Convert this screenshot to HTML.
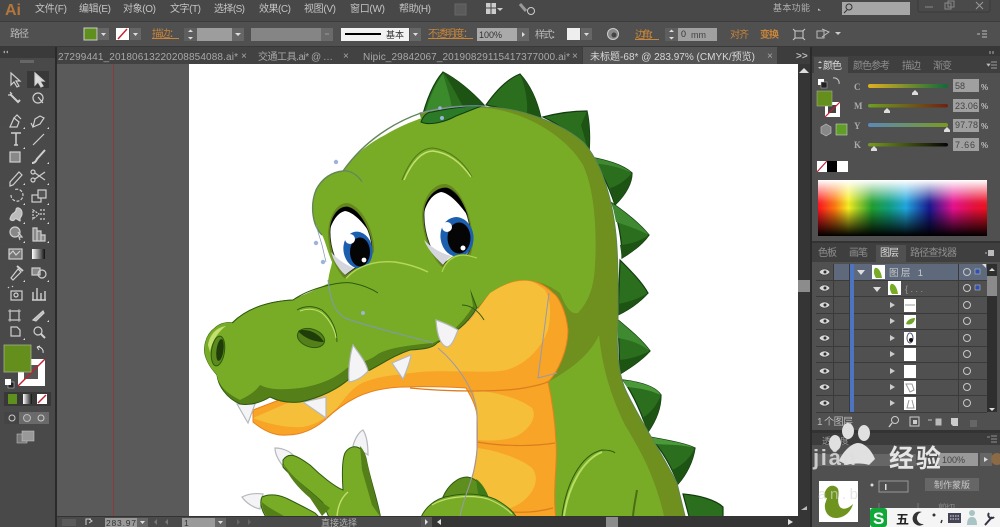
<!DOCTYPE html>
<html lang="zh"><head><meta charset="utf-8"><title>Illustrator</title>
<style>
html,body{margin:0;padding:0;background:#535353}
body{width:1000px;height:527px;overflow:hidden}
svg{display:block;font-family:"Liberation Sans","Noto Sans CJK SC",sans-serif;filter:blur(.35px)}
.m{font-size:10px;fill:#c4c4c4}
.o{font-size:10px;fill:#c9853a;text-decoration:underline}
.t{font-size:10px;fill:#a8a8a8}
.p{font-size:10px;fill:#8f8f8f}
.ic{fill:none;stroke:#cfcfcf;stroke-width:1.2}
.sp{stroke:#123c10;stroke-width:1.2;fill:#2a6e1e}
.th{fill:#f4f4f6;stroke:#b5b8bd;stroke-width:1.2}
.ln{fill:none;stroke:#2c5a10;stroke-width:1}
</style></head><body>
<svg width="1000" height="527" viewBox="0 0 1000 527" xmlns="http://www.w3.org/2000/svg">
<defs>
<linearGradient id="sp" x1="0" x2="1" y1="0" y2="0">
<stop offset="0" stop-color="#ff1020"/><stop offset=".1" stop-color="#ff7a10"/><stop offset=".18" stop-color="#f8f020"/><stop offset=".32" stop-color="#20a030"/><stop offset=".42" stop-color="#10a080"/><stop offset=".52" stop-color="#20a8e0"/><stop offset=".66" stop-color="#181890"/><stop offset=".8" stop-color="#e81090"/><stop offset=".92" stop-color="#e81040"/><stop offset="1" stop-color="#f01020"/>
</linearGradient>
<linearGradient id="spv" x1="0" x2="0" y1="0" y2="1">
<stop offset="0" stop-color="#fff" stop-opacity="1"/><stop offset=".35" stop-color="#fff" stop-opacity=".15"/><stop offset=".5" stop-color="#000" stop-opacity="0"/><stop offset="1" stop-color="#000" stop-opacity="1"/>
</linearGradient>
<linearGradient id="sC" x1="0" x2="1"><stop offset="0" stop-color="#e0b020"/><stop offset="1" stop-color="#106a3a"/></linearGradient>
<linearGradient id="sM" x1="0" x2="1"><stop offset="0" stop-color="#6fa020"/><stop offset="1" stop-color="#702010"/></linearGradient>
<linearGradient id="sY" x1="0" x2="1"><stop offset="0" stop-color="#5a8ab8"/><stop offset="1" stop-color="#7a9a20"/></linearGradient>
<linearGradient id="sK" x1="0" x2="1"><stop offset="0" stop-color="#7a9a20"/><stop offset="1" stop-color="#050505"/></linearGradient>
<linearGradient id="gr" x1="0" x2="1"><stop offset="0" stop-color="#fff"/><stop offset="1" stop-color="#111"/></linearGradient>
<clipPath id="art"><rect x="57" y="64" width="741" height="452"/></clipPath>
</defs>

<!-- base -->
<rect width="1000" height="527" fill="#4a4a4a"/>
<!-- canvas -->
<rect x="57" y="64" width="741" height="452" fill="#5a5a5a"/>
<rect x="189" y="64" width="609" height="452" fill="#fff"/>
<rect x="113" y="64" width="1" height="452" fill="#8c3a3a"/>

<g clip-path="url(#art)">
<!-- spikes -->
<path class="sp" d="M421 122C426 100 434 82 443 72C458 80 472 92 484 105L440 122C432 124 424 125 421 122Z"/>
<path d="M443 72C452 85 462 105 466 112L484 105C472 92 458 80 443 72Z" fill="#1d5414"/>
<path d="M424 120C428 100 435 85 443 74C448 90 452 105 453 113Z" fill="#3b8a2c"/>
<path class="sp" d="M486 105C495 92 507 79 520 74C530 85 537 100 541 118L500 108Z"/>
<path d="M520 74C526 88 528 104 527 114L541 118C537 100 530 85 520 74Z" fill="#1d5414"/>
<path class="sp" d="M543 117C558 113 572 111 587 111C590 125 590 140 589 153C575 135 560 125 543 117Z"/>
<path d="M581 125L587 111C590 125 590 140 589 153Z" fill="#1d5414"/>
<path class="sp" d="M590 157C605 160 622 164 632 173C632 185 624 196 615 205C610 190 602 170 590 157Z"/>
<path d="M632 173C632 185 624 196 615 205L610 188C618 186 626 180 632 173Z" fill="#1d5414"/>
<path d="M590 157C605 160 622 164 632 173C615 165 605 165 594 163Z" fill="#3f8a30"/>
<path class="sp" d="M612 203C625 212 640 224 649 235C642 245 632 252 622 258C622 240 618 220 612 203Z"/>
<path d="M649 235C642 245 632 252 622 258L620 245C632 244 642 240 649 235Z" fill="#1d5414"/>
<path d="M612 203C625 212 640 224 649 235C635 228 625 225 616 222Z" fill="#3f8a30"/>
<path class="sp" d="M620 260C630 270 642 282 648 293C640 302 628 310 618 315Z"/>
<path d="M648 293C640 302 628 310 618 315L618 304C630 302 640 298 648 293Z" fill="#1d5414"/>
<path class="sp" d="M618 320C630 330 642 340 650 351C642 360 630 368 620 374Z"/>
<path d="M650 351C642 360 630 368 620 374L618 360C632 359 642 355 650 351Z" fill="#1d5414"/>
<path d="M618 320C630 330 642 340 650 351C638 342 628 340 618 338Z" fill="#3f8a30"/>
<path class="sp" d="M623 380C640 382 655 386 661 395C661 410 655 422 648 432C642 415 634 395 623 380Z"/>
<path d="M661 395C661 410 655 422 648 432L642 418C650 414 657 405 661 395Z" fill="#1d5414"/>
<path d="M623 380C640 382 655 386 661 395C645 388 635 388 627 387Z" fill="#4b9a3a"/>
<path class="sp" d="M650 437C665 440 685 443 695 448C693 462 686 475 678 484C672 468 662 450 650 437Z"/>
<path d="M695 448C693 462 686 475 678 484L672 470C682 466 690 458 695 448Z" fill="#1d5414"/>
<path d="M650 437C665 440 685 443 695 448C680 444 665 445 656 444Z" fill="#4b9a3a"/>
<path class="sp" d="M683 494C698 495 716 500 723 507L723 520L690 520Z"/>

<!-- back band -->
<path d="M420 113C445 105 470 105 487 107C520 108 560 122 583 142C600 160 612 195 616 235C619 265 618 300 618 320C616 350 618 375 627 393C640 420 660 450 677 483L686 520L555 520L548 380L470 300Z" fill="#6f8f1f" stroke="#5f8650" stroke-width="1"/>
<!-- lower body -->
<path d="M548 382C570 370 590 355 599 335C602 365 610 395 625 425C640 450 655 475 665 520L556 520C552 490 558 460 556 443C555 420 552 400 548 382Z" fill="#79ac26"/>
<path d="M562 516C566 485 580 455 602 450C608 450 613 451 615 453" fill="none" stroke="#2c5a10" stroke-width="1"/>
<path d="M564 516C568 488 582 460 602 452" fill="none" stroke="#b9dc62" stroke-width="2"/>
<path d="M633 516C634 505 636 497 637 490" fill="none" stroke="#4a6e14" stroke-width="2"/>

<!-- neck orange -->
<path d="M253 422C265 432 277 436 287 435C300 435 313 430 325 420C335 410 347 402 357 397C372 390 390 387 407 387C430 386 450 387 466 388C472 398 477 408 477 417L477 447C477 458 474 468 472 480L470 520L556 520C552 490 558 460 556 443C555 420 552 400 548 382C558 372 568 350 568 330C566 310 558 296 553 293C545 285 535 280 523 280C510 280 498 288 490 293L470 320L410 350L253 410Z" fill="#f7a427" stroke="#e8801c" stroke-width="1"/>
<!-- yellow highlights -->
<path d="M253 418C270 425 290 428 303 427C320 424 330 414 337 408C345 398 352 388 362 383C378 376 395 375 420 372C450 370 480 373 500 371C520 369 540 352 548 330C552 312 550 298 545 290C535 282 530 280 523 281C510 281 498 288 490 293L470 320L410 350Z" fill="#f6bf3a"/>
<path d="M473 390C495 392 520 398 532 408C538 418 528 430 517 436C505 441 490 441 477 440C478 425 476 405 473 390Z" fill="#f6bf3a"/>
<path d="M477 448C495 450 520 458 532 468C540 478 535 492 522 502C510 510 500 512 490 507C482 500 475 490 472 480C475 470 477 458 477 448Z" fill="#f6bf3a"/>
<path d="M477 442C500 446 530 447 555 443M513 512C528 513 542 511 553 508" fill="none" stroke="#dd7c1e" stroke-width="1.2"/>
<path d="M410 388C450 392 500 392 524 388C535 386 545 384 549 381" fill="none" stroke="#dd7c1e" stroke-width="1.2"/>

<!-- head -->
<path d="M343 171C350 160 365 145 385 135C410 120 450 106 487 108C525 112 565 135 583 165C595 190 597 235 595 265C594 285 590 300 578 313C570 315 565 305 560 293C548 284 535 280 523 280C510 280 498 288 490 293L477 308L330 300L328 285C328 275 332 265 332 262C327 250 325 240 322 235C312 225 310 205 316 190C322 178 332 172 343 171Z" fill="#79ac26"/>
<path d="M421 113C395 122 365 140 343 171C332 172 322 178 316 190C310 205 312 225 322 235" fill="none" stroke="#62865a" stroke-width="1.4"/>
<path d="M343 171C350 170 358 175 362 182" fill="none" stroke="#62865a" stroke-width="1.2"/>
<path d="M402 180C410 160 420 148 433 148C450 150 464 162 472 177" fill="none" stroke="#4e7a14" stroke-width="1"/>
<path d="M404 180C412 162 422 151 433 151C450 153 462 164 471 177" fill="none" stroke="#c3e070" stroke-width="1.4"/>

<!-- spike 1 overlap on head -->
<path d="M421 122C424 114 428 112 432 112C450 108 470 106 484 105L456 116C445 122 430 126 421 122Z" fill="#2a7a28" stroke="#123c10" stroke-width="1"/>

<!-- right eye -->
<path d="M446 184C460 187 473 215 473 245L470 258L443 268C431 258 422 235 422 214C423 198 433 183 446 184Z" fill="#65881c"/>
<path d="M447 188C462 192 472 222 471 245C470 255 465 257 458 257C450 258 445 262 443 265C432 255 424 235 424 215C424 200 435 187 447 188Z" fill="#fff" stroke="#222" stroke-width=".8"/>
<path d="M424 240C432 248 442 254 452 256C448 258 445 262 443 265C436 258 428 250 424 240Z" fill="#d5d5de"/>
<path d="M424 212C425 199 435 187 447 188C456 191 464 203 468 216C458 202 449 193 441 192C432 194 427 203 424 212Z" fill="#000"/>
<ellipse cx="457" cy="237" rx="16.500" ry="20" fill="#1c5fae" transform="rotate(-8 457 237)"/>
<ellipse cx="459" cy="238" rx="11.500" ry="15.500" fill="#050505"/>
<circle cx="447" cy="227" r="5" fill="#fff"/><circle cx="463" cy="248" r="2.500" fill="#fff"/>
<!-- left eye -->
<path d="M348 203C361 206 375 230 374 252L360 268L345 279C334 268 328 250 328 232C329 216 337 202 348 203Z" fill="#65881c"/>
<path d="M348 207C360 210 372 232 372 250C372 256 365 262 358 266L345 275C337 265 330 250 330 232C330 218 338 206 348 207Z" fill="#fff" stroke="#222" stroke-width=".8"/>
<path d="M331 252C338 260 346 265 354 268L345 275C338 268 333 260 331 252Z" fill="#d5d5de"/>
<path d="M330 229C331 217 338 206 348 207C356 209 363 218 368 230C360 219 352 212 345 211C337 213 333 221 330 229Z" fill="#000"/>
<ellipse cx="358" cy="250" rx="14.500" ry="18.500" fill="#1c5fae" transform="rotate(-10 358 250)"/>
<ellipse cx="360" cy="252" rx="10" ry="14.500" fill="#050505"/>
<circle cx="350" cy="239" r="5" fill="#fff"/><circle cx="364" cy="260" r="2.400" fill="#fff"/>

<!-- lid bumps -->
<path d="M341 286C350 268 372 260 395 262C410 264 420 268 427 272L440 300L341 300Z" fill="#79ac26"/>
<path d="M441 272C446 256 458 252 470 255C476 270 470 290 470 300L430 300Z" fill="#79ac26"/>
<path d="M343 283C352 268 372 260 395 262C408 264 420 268 428 272" fill="none" stroke="#b5d85a" stroke-width="1.400"/>
<path d="M442 272C447 258 458 253 470 256L477 258" fill="none" stroke="#b5d85a" stroke-width="1"/>

<!-- lower jaw teeth -->
<path class="th" d="M303 402L326 418L326 397Z"/>
<path class="th" d="M237 404L248 423L255 404Z"/>

<!-- snout dark -->
<path d="M293 300C275 301 250 305 233 323C228 322 220 323 215 328C205 335 202 350 207 360C210 368 215 372 217 375C218 385 226 398 240 404C250 406 262 402 270 397C280 402 290 403 300 402C320 398 340 388 350 378C358 372 365 372 370 370C385 362 395 355 410 350C425 349 433 348 437 343C450 335 465 328 477 308L470 290L340 280Z" fill="#557f18" stroke="#2c5a10" stroke-width="1"/>
<!-- snout light -->
<path d="M293 300C275 301 250 305 233 323C228 322 220 323 215 328C205 335 202 350 207 360C210 368 215 372 217 375C218 385 226 393 240 400C248 396 255 392 260 385C270 390 283 390 300 388C320 385 336 378 347 368C358 362 368 362 378 354C388 348 410 345 433 343C445 338 462 325 473 306L470 288L340 278Z" fill="#79ac26"/>
<path d="M232 323C250 305 275 301 293 300C310 288 340 281 352 283C362 285 372 289 378 293" fill="none" stroke="#2c5a10" stroke-width="1"/>
<path d="M297 310C305 305 315 306 322 310C332 318 337 330 337 342" fill="none" stroke="#2c5a10" stroke-width=".9"/>
<path d="M300 311C308 308 316 309 322 313C330 320 335 330 336 338" fill="none" stroke="#c3e070" stroke-width="1.100"/>
<path d="M208 345C210 333 218 327 226 326C220 330 212 340 210 352Z" fill="#c3e070"/>
<path d="M462 305C470 305 478 310 484 320" fill="none" stroke="#2c5a10" stroke-width="1"/>
<ellipse cx="218" cy="351" rx="6.500" ry="15" fill="#5c8a1c" stroke="#2c5a10" transform="rotate(8 218 351)"/>
<ellipse cx="220" cy="350" rx="3.500" ry="11" fill="#1e3d08" transform="rotate(8 220 350)"/>
<ellipse cx="311" cy="338" rx="14" ry="9" fill="#557f18" stroke="#2c5a10" transform="rotate(18 311 338)"/>
<path d="M298 331C306 328 318 332 324 342C314 342 304 338 298 331Z" fill="#1e3d08"/>

<!-- upper teeth -->
<path class="th" d="M353 345C360 355 366 362 368 371C362 378 355 381 349 382C348 370 350 355 353 345Z"/>
<path class="th" d="M392 363L403 379C406 372 410 362 411 355Z"/>
<path class="th" d="M436 320C445 323 453 327 458 330C455 338 452 346 447 347C440 345 437 335 436 320Z"/>

<!-- hand -->
<path class="th" d="M275 448C282 448 290 451 294 456L283 466C279 461 275 454 275 448Z"/>
<path class="th" d="M363 430C367 436 368 446 368 455L353 446C355 438 359 432 363 430Z"/>
<path class="th" d="M242 497C248 494 256 493 263 494L260 509C254 508 246 503 242 497Z"/>
<path d="M262 497C270 493 280 495 288 499C298 504 308 509 315 513L322 520L268 520C262 512 259 503 262 497Z" fill="#79ac26" stroke="#2c5a10"/>
<path d="M262 502C262 510 266 516 270 520L290 520C280 513 268 508 262 502Z" fill="#557f18"/>
<path d="M283 460C290 450 300 458 310 465C320 475 335 487 343 490C342 475 342 460 345 453C350 444 362 444 366 458C370 480 378 500 381 520L330 520L323 503C310 490 292 478 283 467Z" fill="#79ac26" stroke="#2c5a10"/>
<path d="M283 463C292 478 310 490 323 503L330 508L322 516L310 498C298 488 288 476 283 463Z" fill="#557f18"/>
<path d="M360 446C364 450 366 456 367 462C371 480 376 500 381 518L372 505L362 470Z" fill="#557f18"/>
<path d="M337 516C338 505 342 497 348 492" fill="none" stroke="#c3e070" stroke-width="1.400"/>

<!-- arm -->
<path d="M443 497C448 485 458 477 467 477C476 478 484 486 488 497Z" fill="#5e8f1e" stroke="#2c5a10"/>
<path d="M476 479C482 483 486 490 488 497L478 494Z" fill="#3f7a18"/>
<path d="M420 520C424 508 435 498 450 496C470 492 490 495 500 502C508 507 514 512 518 520Z" fill="#79ac26" stroke="#2c5a10"/>
<path d="M432 505C445 497 470 494 488 499C498 503 506 508 512 514" fill="none" stroke="#c3e070" stroke-width="1.200"/>

<!-- selection paths -->
<g fill="none" stroke="#7f98b8" stroke-width="1">
<path d="M421 113C440 108 465 105 485 106"/>
<path d="M328 280C330 295 332 310 345 318C365 326 405 335 433 343"/>
</g>
<g fill="none" stroke="#9a98ad" stroke-width="1">
<path d="M438 348C458 365 475 390 477 413C478 440 478 460 472 477C468 490 462 505 460 516"/>
<path d="M549 293L538 378L557 373"/>
</g>
<path d="M316 225L322 245L326 262" fill="none" stroke="#7f98b8" stroke-width=".7"/>
<g fill="#9db2dc"><circle cx="440" cy="108" r="1.800"/><circle cx="442" cy="118" r="2"/><circle cx="336" cy="162" r="2.200"/><circle cx="316" cy="243" r="2.200"/><circle cx="323" cy="262" r="2.200"/><circle cx="363" cy="313" r="2"/></g>
</g>

<!-- menu bar -->
<rect width="1000" height="22" fill="#484848"/>
<rect y="21" width="1000" height="1" fill="#3c3c3c"/>
<text x="5" y="15" font-size="16" font-weight="bold" fill="#b3763c">Ai</text>
<g class="m">
<text class="m" x="35" y="12" textLength="32">文件(F)</text>
<text class="m" x="79" y="12" textLength="32">编辑(E)</text>
<text class="m" x="123" y="12" textLength="33">对象(O)</text>
<text class="m" x="170" y="12" textLength="31">文字(T)</text>
<text class="m" x="214" y="12" textLength="31">选择(S)</text>
<text class="m" x="259" y="12" textLength="32">效果(C)</text>
<text class="m" x="304" y="12" textLength="32">视图(V)</text>
<text class="m" x="350" y="12" textLength="35">窗口(W)</text>
<text class="m" x="399" y="12" textLength="32">帮助(H)</text>
</g>
<rect x="455" y="4" width="11" height="11" fill="#5a5a5a" stroke="#666"/>
<rect x="486" y="3" width="10" height="11" fill="#ccc"/><path d="M491 3V14M486 8H496" stroke="#444"/>
<path d="M497 8l3 3 3-3z" fill="#ccc"/>
<path d="M520 4l6 7" stroke="#999" stroke-width="3"/><circle cx="531" cy="11" r="3.500" fill="none" stroke="#ccc"/>
<text x="773" y="11" font-size="9" fill="#b0b0b0" textLength="37">基本功能</text>
<path d="M818 8.500l3 2 -3 0z" fill="#ccc"/>
<rect x="842" y="2" width="68" height="13" fill="#a6a6a6"/>
<circle cx="849" cy="7" r="3" fill="none" stroke="#333"/><path d="M847 10l-3 3" stroke="#333"/>
<rect x="918" y="-2" width="72" height="14" rx="2" fill="#4a4a4a" stroke="#3a3a3a"/>
<path d="M925 7h8" stroke="#888"/><rect x="945" y="3" width="6" height="6" fill="none" stroke="#888"/><rect x="948" y="1" width="6" height="6" fill="none" stroke="#888"/>
<path d="M976 2l7 7M983 2l-7 7" stroke="#999"/>

<!-- control bar -->
<rect y="22" width="1000" height="25" fill="#505050"/>
<rect y="46" width="1000" height="1" fill="#383838"/>
<text x="10" y="37" font-size="10" fill="#bbb" textLength="19">路径</text>
<rect x="84" y="28" width="13" height="12" fill="#5f8f1c" stroke="#ccc"/>
<rect x="98" y="28" width="11" height="12" fill="#666"/><path d="M101 33l2.500 3 2.500-3z" fill="#ddd"/>
<rect x="116" y="28" width="13" height="12" fill="#fff"/><path d="M118 39l9-10" stroke="#c02030" stroke-width="1.400"/>
<rect x="130" y="28" width="11" height="12" fill="#666"/><path d="M133 33l2.500 3 2.500-3z" fill="#ddd"/>
<text class="o" x="152" y="37" textLength="27">描边：</text>
<rect x="184" y="28" width="13" height="13" fill="#5e5e5e"/><path d="M188 32l2.500-2.500 2.500 2.500zM188 37l2.500 2.500 2.500-2.500z" fill="#ddd"/>
<rect x="197" y="28" width="35" height="13" fill="#9d9d9d"/>
<rect x="232" y="28" width="12" height="13" fill="#666"/><path d="M235 33l3 3 3-3z" fill="#ddd"/>
<rect x="251" y="28" width="70" height="13" fill="#858585"/>
<rect x="321" y="28" width="12" height="13" fill="#6a6a6a"/><path d="M325 34h4" stroke="#999"/>
<rect x="341" y="28" width="68" height="13" fill="#f2f2f2"/><rect x="345" y="33" width="36" height="2" fill="#000"/>
<text x="386" y="38" font-size="9" fill="#333">基本</text>
<rect x="410" y="28" width="11" height="13" fill="#666"/><path d="M413 33l2.500 3 2.500-3z" fill="#ddd"/>
<text class="o" x="428" y="37" textLength="45">不透明度：</text>
<rect x="477" y="28" width="40" height="13" fill="#aaa"/>
<text x="479" y="38" font-size="9" fill="#333">100%</text>
<rect x="517" y="28" width="12" height="13" fill="#666"/><path d="M522 32l3 2.500-3 2.500z" fill="#ddd"/>
<text x="535" y="38" font-size="10" fill="#bbb" textLength="26">样式：</text>
<rect x="567" y="28" width="13" height="12" fill="#eee"/>
<rect x="581" y="28" width="11" height="12" fill="#666"/><path d="M584 33l2.500 3 2.500-3z" fill="#ddd"/>
<circle cx="613" cy="34" r="5.500" fill="#888" stroke="#ccc"/><circle cx="614" cy="35" r="2.500" fill="#444"/>
<text class="o" x="635" y="38" textLength="24">边角：</text>
<rect x="665" y="28" width="13" height="13" fill="#5e5e5e"/><path d="M669 32l2.500-2.500 2.500 2.500zM669 37l2.500 2.500 2.500-2.500z" fill="#ddd"/>
<rect x="678" y="28" width="39" height="13" fill="#a0a0a0"/>
<text x="681" y="37" font-size="9" fill="#333">0</text><text x="691" y="38" font-size="9" fill="#444">mm</text>
<text class="o" x="730" y="38" textLength="19" style="text-decoration:none">对齐</text>
<text class="o" x="760" y="38" textLength="19" style="text-decoration:none;font-weight:bold">变换</text>
<path d="M793 29l12 11M805 29l-12 11" stroke="#ccc" stroke-width="1"/><rect x="795" y="31" width="8" height="7" fill="#505050" stroke="#ccc"/>
<rect x="817" y="31" width="7" height="7" fill="none" stroke="#bbb"/><path d="M822 29l7 3-7 5" fill="none" stroke="#bbb"/>
<path d="M835 32l3 3 3-3z" fill="#ccc"/>
<path d="M977 34h3M982 31h5M982 34h5M982 37h5" stroke="#bbb"/>

<!-- tabs -->
<rect y="47" width="1000" height="17" fill="#3d3d3d"/>
<rect x="0" y="47" width="55" height="11" fill="#3a3a3a"/>
<path d="M3 52l2-1.500v3zM6 52l2-1.500v3z" fill="#aaa"/>
<rect x="57" y="47" width="193" height="17" fill="#424242"/>
<rect x="250" y="47" width="110" height="17" fill="#424242"/>
<rect x="360" y="47" width="222" height="17" fill="#424242"/>
<rect x="583" y="47" width="194" height="17" fill="#545454"/>
<text class="t" x="58" y="60" textLength="180">27299441_20180613220208854088.ai*</text>
<text class="t" x="241" y="59" font-size="9">×</text>
<text class="t" x="258" y="60" textLength="75">交通工具.ai* @ …</text>
<text class="t" x="343" y="59">×</text>
<text class="t" x="363" y="60" textLength="207">Nipic_29842067_20190829115417377000.ai*</text>
<text class="t" x="572" y="59">×</text>
<text x="590" y="60" font-size="10" fill="#d8d8d8" textLength="165">未标题-68* @ 283.97% (CMYK/预览)</text>
<text class="t" x="767" y="59">×</text>
<text x="796" y="59" font-size="10" font-weight="bold" fill="#bbb">&gt;&gt;</text>

<!-- toolbar -->
<rect x="0" y="58" width="55" height="458" fill="#494949"/>
<rect x="0" y="516" width="55" height="11" fill="#494949"/>
<rect x="55" y="47" width="2" height="480" fill="#2a2a2a"/>
<rect x="20" y="60" width="14" height="3" fill="#666"/>
<rect x="27" y="71" width="22" height="17" fill="#383838"/>
<g class="ic">
<path d="M11 73l0 12 3-3 3 5 2-1-3-5 4 0z"/>
<path d="M35 73l0 12 3-3 3 5 2-1-3-5 4 0z" fill="#ddd"/>
<path d="M10 94l8 8 2-2" stroke-width="2"/><path d="M10 92l2 2M8 95h3"/>
<circle cx="38" cy="98" r="5"/><path d="M38 97l5 6"/>
<path d="M10 127l4-9 5 4-2 5z"/><path d="M14 118l3-3 4 4"/>
<path d="M33 127l2-8 5-3 4 2-4 6z"/><path d="M33 127l-2-4"/>
<path d="M11 133h10M16 133v12M14 145h4" stroke-width="1.500"/>
<path d="M33 145l11-11"/>
<rect x="10" y="152" width="10" height="10" fill="#888"/>
<path d="M32 163c3 0 4-2 5-4l8-9" stroke-width="2"/>
<path d="M10 182l9-10 3 3-9 10-3 1z"/>
<circle cx="33" cy="180" r="2"/><circle cx="33" cy="172" r="2"/><path d="M35 179l10-7M35 173l10 7"/>
<path d="M11 195a6 6 0 1 0 3-5" stroke-dasharray="3 1.500"/>
<rect x="32" y="195" width="9" height="7"/><rect x="38" y="190" width="8" height="8" fill="#555"/>
<path d="M10 219c2-8 6-5 6-9s6-2 6 3-3 4-2 7-4-3-5-1-4 2-5 0z" fill="#bbb"/>
<path d="M33 210l6 4-6 5zM40 210h6M40 214h6M40 219h6" stroke-dasharray="2 1"/>
<circle cx="15" cy="232" r="5" fill="#888"/><path d="M18 232l4 5-3 0 1 3"/>
<path d="M33 228h4v13h-4zM37 231h4v10h-4zM41 235h4v6h-4z" fill="#888"/>
<rect x="9" y="249" width="13" height="10" fill="#777"/><path d="M9 255l4-4 3 4 4-4"/>
<rect x="32" y="249" width="13" height="10" fill="url(#gr)" stroke="none"/>
<path d="M11 278l7-9 3 3-8 8z"/><path d="M17 266l6 5" stroke-width="2"/>
<rect x="32" y="268" width="8" height="7" fill="#888"/><circle cx="42" cy="274" r="4"/>
<rect x="11" y="291" width="11" height="9"/><circle cx="16" cy="295" r="2"/><path d="M8 287l1 1M12 286l1 1"/>
<path d="M33 300v-8M37 300v-12M41 300v-7M45 300v-9M32 300h14" stroke-width="1.400"/>
<rect x="10" y="311" width="9" height="9"/><path d="M8 311h13M8 320h13M10 309v13M19 309v13" stroke-width=".7"/>
<path d="M33 320l10-9 1 2-8 8z" fill="#bbb"/>
<path d="M11 327h6l3 3v6h-9z"/>
<circle cx="38" cy="331" r="4"/><path d="M41 334l4 4" stroke-width="2"/>
</g>
<path d="M0 128H55M0 188H55M0 244H55" stroke="#555" stroke-width=".6" opacity=".6"/>
<g fill="#ddd"><path d="M23 129h2v-2zM47 129h2v-2zM23 149h2v-2zM47 164h2v-2zM23 185h2v-2zM47 185h2v-2zM23 205h2v-2zM47 205h2v-2zM23 224h2v-2zM47 224h2v-2zM23 243h2v-2zM47 243h2v-2zM23 282h2v-2zM47 282h2v-2zM47 322h2v-2zM23 340h2v-2z"/></g>

<!-- fill / stroke -->
<rect x="18" y="359" width="27" height="27" fill="#fff"/><rect x="24" y="365" width="14" height="14" fill="#555"/>
<path d="M18 386l27-27" stroke="#c02030" stroke-width="1.400"/>
<rect x="4" y="345" width="27" height="27" fill="#648f1c" stroke="#a5b08a" stroke-width=".8"/>
<path d="M37 347a5 5 0 0 1 6 6M37 347l3-1M37 347l2 3" fill="none" stroke="#ddd"/>
<rect x="8" y="382" width="6" height="6" fill="#222" stroke="#ddd" stroke-width=".5"/><rect x="5" y="379" width="6" height="6" fill="#fff"/>
<rect x="4" y="392" width="47" height="14" fill="#383838"/>
<rect x="8" y="394" width="9" height="10" fill="#5f8f1c"/>
<rect x="23" y="394" width="9" height="10" fill="url(#gr)"/>
<rect x="37" y="394" width="10" height="10" fill="#fff"/><path d="M38 403l8-8" stroke="#c02030" stroke-width="1.400"/>
<rect x="4" y="412" width="45" height="12" fill="#6a6a6a"/><rect x="4" y="412" width="15" height="12" fill="#444"/>
<circle cx="12" cy="418" r="3" fill="none" stroke="#ccc"/><circle cx="27" cy="418" r="3.500" fill="#777" stroke="#bbb"/><circle cx="41" cy="418" r="3" fill="none" stroke="#ccc"/>
<rect x="17" y="434" width="10" height="9" fill="#777" stroke="#ccc" stroke-width=".5"/><rect x="22" y="431" width="12" height="10" fill="#999" stroke="#ccc" stroke-width=".5"/>

<!-- status bar -->
<rect x="57" y="516" width="741" height="11" fill="#4a4a4a"/>
<rect x="57" y="516" width="741" height="1" fill="#333"/>
<rect x="62" y="519" width="14" height="7" fill="#5a5a5a"/>
<path d="M86 525v-6h5M89 519l3 2-3 2" fill="none" stroke="#ccc"/>
<rect x="105" y="518" width="32" height="9" fill="#9a9a9a"/>
<text x="106" y="526" font-size="8.500" fill="#333" textLength="30">283.97</text>
<rect x="137" y="518" width="11" height="9" fill="#666"/><path d="M140 521l2.500 3 2.500-3z" fill="#ddd"/>
<path d="M157 519l-3 3 3 3zM168 519l-3 3 3 3z" fill="#777"/>
<rect x="182" y="518" width="33" height="9" fill="#9a9a9a"/>
<text x="184" y="526" font-size="8.500" fill="#333">1</text>
<rect x="215" y="518" width="11" height="9" fill="#666"/><path d="M218 521l2.500 3 2.500-3z" fill="#ddd"/>
<path d="M237 519l3 3-3 3zM248 519l3 3-3 3z" fill="#666"/>
<text x="321" y="526" font-size="9" fill="#b0b0b0" textLength="36">直接选择</text>
<rect x="421" y="517" width="11" height="10" fill="#555"/><path d="M425 519l3 3-3 3z" fill="#ddd"/>
<rect x="432" y="517" width="366" height="10" fill="#353535"/>
<path d="M441 519l-4 3 4 3z" fill="#ddd"/>
<rect x="606" y="517" width="12" height="10" fill="#8c8c8c"/>
<path d="M788 519l5 3-5 3z" fill="#ddd"/>

<!-- vertical scrollbar -->
<rect x="798" y="64" width="12" height="463" fill="#353535"/>
<path d="M799 73l5-5 5 5z" fill="#ddd"/>
<rect x="798" y="280" width="12" height="12" fill="#8c8c8c"/>
<path d="M801 510l6-4v4z" fill="#bbb"/>
<rect x="810" y="47" width="2" height="480" fill="#2a2a2a"/>

<!-- right panels -->
<rect x="812" y="47" width="188" height="480" fill="#505050"/>
<rect x="812" y="47" width="188" height="9" fill="#383838"/>
<path d="M990 51v3M993 51v3" stroke="#aaa"/>
<!-- color -->
<rect x="812" y="56" width="188" height="17" fill="#3f3f3f"/>
<rect x="814" y="57" width="34" height="16" fill="#505050"/>
<path d="M818 63l2-2 2 2zM818 67l2 2 2-2z" fill="#ccc"/>
<text x="823" y="69" font-size="10" fill="#ddd" textLength="19">颜色</text>
<text class="p" x="853" y="69" textLength="37">颜色参考</text>
<text class="p" x="902" y="69" textLength="19">描边</text>
<text class="p" x="933" y="69" textLength="19">渐变</text>
<path d="M987 64h3l-1.500 2zM991 62h6M991 65h6M991 68h6" stroke="#bbb" fill="#bbb" stroke-width=".7"/>
<rect x="818" y="79" width="6" height="6" fill="#fff"/><rect x="821" y="82" width="6" height="6" fill="#222" stroke="#bbb" stroke-width=".5"/>
<path d="M833 78a5 5 0 0 1 6 6" fill="none" stroke="#ccc"/>
<rect x="825" y="102" width="15" height="15" fill="#fff"/><rect x="828" y="105" width="8" height="8" fill="#444"/><path d="M825 117l15-15" stroke="#c02030" stroke-width="1.200"/>
<rect x="817" y="91" width="15" height="15" fill="#648f1c" stroke="#a5b08a" stroke-width=".6"/>
<path d="M821 127l5-3 5 3v6l-5 3-5-3z" fill="#888" stroke="#bbb" stroke-width=".7"/>
<rect x="836" y="124" width="11" height="11" fill="#5f9f28" stroke="#ccc" stroke-width=".6"/>
<g font-size="9" font-weight="bold" fill="#aaa"><text x="854" y="90" font-family="Liberation Serif">C</text><text x="854" y="109" font-family="Liberation Serif">M</text><text x="854" y="129" font-family="Liberation Serif">Y</text><text x="854" y="148" font-family="Liberation Serif">K</text></g>
<rect x="868" y="84" width="80" height="4" rx="2" fill="url(#sC)"/>
<rect x="868" y="104" width="80" height="3.500" rx="2" fill="url(#sM)"/>
<rect x="868" y="123" width="80" height="4" rx="2" fill="url(#sY)"/>
<rect x="868" y="143" width="80" height="3.500" rx="2" fill="url(#sK)"/>
<g fill="#ddd"><path d="M912 93l3-3 3 3v2h-6z"/><path d="M884 111l3-3 3 3v2h-6z"/><path d="M944 130l3-3 3 3v2h-6z"/><path d="M871 149l3-3 3 3v2h-6z"/></g>
<g fill="#a0a0a0"><rect x="953" y="79" width="26" height="13"/><rect x="953" y="99" width="26" height="13"/><rect x="953" y="119" width="26" height="13"/><rect x="953" y="138" width="26" height="13"/></g>
<g font-size="9" fill="#444"><text x="955" y="89">58</text><text x="955" y="109" textLength="23">23.06</text><text x="955" y="128" textLength="23">97.78</text><text x="955" y="148" textLength="20">7.66</text></g>
<g font-size="8" font-weight="bold" fill="#bbb"><text x="981" y="90">%</text><text x="981" y="109">%</text><text x="981" y="129">%</text><text x="981" y="148">%</text></g>
<rect x="817" y="161" width="10" height="11" fill="#fff"/><path d="M817 172l10-11" stroke="#c02030" stroke-width="1.200"/>
<rect x="827" y="161" width="10" height="11" fill="#000"/><rect x="837" y="161" width="11" height="11" fill="#fff"/>
<rect x="818" y="180" width="169" height="56" fill="url(#sp)"/>
<rect x="818" y="180" width="169" height="56" fill="url(#spv)"/>
<rect x="812" y="241" width="188" height="2" fill="#333"/>

<!-- layers -->
<rect x="812" y="243" width="188" height="19" fill="#3f3f3f"/>
<rect x="876" y="245" width="30" height="17" fill="#505050"/>
<text class="p" x="818" y="256" textLength="19">色板</text>
<text class="p" x="849" y="256" textLength="19">画笔</text>
<text x="880" y="256" font-size="10" fill="#ddd" textLength="19">图层</text>
<text class="p" x="910" y="256" textLength="47">路径查找器</text>
<rect x="988" y="250" width="6" height="6" fill="#bbb"/><path d="M985 253h2" stroke="#bbb"/>
<rect x="816" y="264" width="171" height="148" fill="#505050"/>
<rect x="816" y="264" width="171" height="16" fill="#5e6a7c"/>
<rect x="816" y="264" width="18" height="16" fill="#505050"/>
<g stroke="#3a3a3a" fill="none"><path d="M816 280.500H987M816 296.500H987M816 313.500H987M816 329.500H987M816 346.500H987M816 362.500H987M816 379.500H987M816 395.500H987M816 412.500H987"/><path d="M833.500 264V412M958.500 264V412M849.500 264V412"/></g>
<rect x="850" y="264" width="4" height="148" fill="#4c74c0"/>
<g id="eyes" fill="#d8d8d8" stroke="#2a2a2a" stroke-width=".5">
<path d="M819 272c3-4 8-4 11 0c-3 4-8 4-11 0z"/><path d="M819 288c3-4 8-4 11 0c-3 4-8 4-11 0z"/><path d="M819 305c3-4 8-4 11 0c-3 4-8 4-11 0z"/><path d="M819 321c3-4 8-4 11 0c-3 4-8 4-11 0z"/><path d="M819 338c3-4 8-4 11 0c-3 4-8 4-11 0z"/><path d="M819 354c3-4 8-4 11 0c-3 4-8 4-11 0z"/><path d="M819 371c3-4 8-4 11 0c-3 4-8 4-11 0z"/><path d="M819 387c3-4 8-4 11 0c-3 4-8 4-11 0z"/><path d="M819 403c3-4 8-4 11 0c-3 4-8 4-11 0z"/>
</g>
<g fill="#333"><circle cx="825" cy="272" r="1.500"/><circle cx="825" cy="288" r="1.500"/><circle cx="825" cy="305" r="1.500"/><circle cx="825" cy="321" r="1.500"/><circle cx="825" cy="338" r="1.500"/><circle cx="825" cy="354" r="1.500"/><circle cx="825" cy="371" r="1.500"/><circle cx="825" cy="387" r="1.500"/><circle cx="825" cy="403" r="1.500"/></g>
<path d="M857 270h8l-4 5z" fill="#ddd"/><path d="M873 287h8l-4 5z" fill="#ddd"/>
<g fill="#ccc"><path d="M890 302l5 3-5 3zM890 318l5 3-5 3zM890 335l5 3-5 3zM890 351l5 3-5 3zM890 368l5 3-5 3zM890 384l5 3-5 3zM890 400l5 3-5 3z"/></g>
<rect x="872" y="265" width="13" height="14" fill="#fff"/><path d="M875 268c3-1 6 3 7 10h-6c-2-3-3-7-1-10z" fill="#79ac26"/>
<rect x="888" y="281" width="13" height="14" fill="#fff"/><path d="M891 284c3-1 6 3 7 10h-6c-2-3-3-7-1-10z" fill="#79ac26"/>
<g fill="#fff"><rect x="904" y="299" width="12" height="13"/><rect x="904" y="315" width="12" height="13"/><rect x="904" y="332" width="12" height="13"/><rect x="904" y="348" width="12" height="13"/><rect x="904" y="365" width="12" height="13"/><rect x="904" y="381" width="12" height="13"/><rect x="904" y="397" width="12" height="13"/></g>
<path d="M905 305h10" stroke="#999"/>
<path d="M906 324c1-4 5-6 9-6c0 4-4 8-9 6z" fill="#6fa52a"/>
<ellipse cx="910" cy="338" rx="3" ry="5" fill="#fff" stroke="#557"/><circle cx="911" cy="340" r="2" fill="#111"/>
<path d="M906 384l4 8 4-2-2-6zM909 400l-2 8h7l-2-8" fill="none" stroke="#999"/>
<text x="889" y="276" font-size="9.500" fill="#c8c8c8" textLength="34">图层 1</text>
<text x="905" y="292" font-size="9" fill="#999" textLength="18">{...</text>
<g fill="none" stroke="#c8c8c8"><circle cx="967" cy="272" r="3.500"/><circle cx="967" cy="288" r="3.500"/><circle cx="967" cy="305" r="3.500"/><circle cx="967" cy="321" r="3.500"/><circle cx="967" cy="338" r="3.500"/><circle cx="967" cy="354" r="3.500"/><circle cx="967" cy="371" r="3.500"/><circle cx="967" cy="387" r="3.500"/><circle cx="967" cy="403" r="3.500"/></g>
<rect x="975" y="269" width="5" height="5" fill="#2f52b0" stroke="#ccc" stroke-width=".5"/><rect x="975" y="285" width="5" height="5" fill="#2f52b0" stroke="#ccc" stroke-width=".5"/>
<path d="M982 264h4v4z" fill="#ddd"/>
<rect x="987" y="264" width="10" height="148" fill="#2f2f2f"/>
<path d="M989 271l3-3 3 3zM989 408l3 3 3-3z" fill="#ddd"/>
<rect x="987" y="276" width="10" height="20" fill="#8a8a8a"/>
<!-- layers footer -->
<rect x="812" y="413" width="188" height="17" fill="#505050"/>
<text x="817" y="425" font-size="10" fill="#bbb" textLength="36">1 个图层</text>
<circle cx="895" cy="420" r="3.500" fill="none" stroke="#ccc"/><path d="M892 423l-3 4" stroke="#ccc" stroke-width="1.400"/>
<rect x="910" y="417" width="9" height="9" fill="none" stroke="#ccc"/><rect x="913" y="420" width="4" height="4" fill="#ccc"/>
<path d="M928 420h4M936 419h5v6h-5z" stroke="#bbb" fill="#bbb"/>
<path d="M951 418h7v8h-5l-2-2z" fill="#ccc"/>
<rect x="970" y="420" width="7" height="7" fill="#666"/>
<!-- transparency panel -->
<rect x="812" y="430" width="188" height="3" fill="#333"/>
<rect x="812" y="433" width="188" height="12" fill="#3c3c3c"/>
<text x="822" y="444" font-size="9" fill="#999">透明度</text>
<path d="M987 437h3M991 436h6M991 439h6M991 442h6" stroke="#aaa" stroke-width=".7"/>
<rect x="812" y="445" width="188" height="82" fill="#505050"/>
<rect x="816" y="454" width="100" height="12" fill="#666"/>
<rect x="938" y="453" width="40" height="13" fill="#999"/>
<text x="942" y="463" font-size="9" fill="#444">100%</text>
<rect x="980" y="453" width="12" height="13" fill="#666"/><path d="M984 457l4 2.500-4 2.500z" fill="#ddd"/>
<circle cx="997" cy="459" r="6" fill="#8c6a45"/>
<rect x="819" y="481" width="39" height="41" fill="#fff"/>
<path d="M826 490c3-6 10-5 12-1c2 6-2 12 2 18c3 3 8 2 13-3c-2 8-9 14-17 14c-8 0-12-7-11-14l2-6c-3 0-4-3-1-8z" fill="#6e941f"/>
<circle cx="872" cy="485" r="1.500" fill="#ddd"/>
<rect x="879" y="481" width="29" height="11" fill="none" stroke="#999"/>
<rect x="885" y="484" width="1.500" height="6" fill="#ddd"/>
<rect x="925" y="478" width="54" height="13" fill="#666"/>
<text x="934" y="488" font-size="9" fill="#c8c8c8" textLength="36">制作蒙版</text>
<path d="M879 503v12M918 503v12" stroke="#777"/>
<text x="938" y="511" font-size="9" fill="#888" textLength="17">剪切</text>

<!-- watermark -->
<g fill="#e0e0e0">
<ellipse cx="848" cy="431" rx="6" ry="8"/><ellipse cx="864" cy="433" rx="6" ry="8"/><ellipse cx="835" cy="443" rx="6" ry="8"/>
<path d="M858 443c7 0 14 8 17 16l-6 6c-5-2-17-2-22 0l-8-4c3-8 12-18 19-18z"/>
</g>
<text x="813" y="465" font-size="22" font-weight="bold" fill="#dedede" opacity=".85" textLength="43">jiǎn</text>
<text x="889" y="467" font-size="25" font-weight="bold" fill="#e6e6e6" textLength="52">经验</text>
<text x="818" y="499" font-size="15" fill="#d8d8d8" opacity=".65" textLength="40">an.b</text>

<!-- IME bar -->
<rect x="870" y="508" width="130" height="19" fill="#f5f5f5"/>
<rect x="870" y="508" width="17" height="19" rx="3" fill="#11a83a"/>
<text x="873" y="524" font-size="17" font-weight="bold" fill="#fff">S</text>
<text x="896" y="524" font-size="13" font-weight="bold" fill="#222">五</text>
<path d="M922 512a7 7 0 1 0 2 12 6 6 0 0 1-2-12z" fill="#333"/>
<circle cx="934" cy="515" r="1.500" fill="#333"/><path d="M942 520l-1 3" stroke="#333" stroke-width="1.500"/>
<rect x="948" y="513" width="13" height="10" fill="#445"/><path d="M950 516h9M950 519h9" stroke="#dde" stroke-dasharray="1.500 1"/>
<circle cx="972" cy="513" r="3" fill="#a8c4c4"/><path d="M967 525c0-6 2-8 5-8s5 2 5 8z" fill="#a8c4c4"/>
<path d="M985 525l7-8M989 513a3 3 0 0 0 5 4" stroke="#334" stroke-width="2" fill="none"/>
</svg>
</body></html>
